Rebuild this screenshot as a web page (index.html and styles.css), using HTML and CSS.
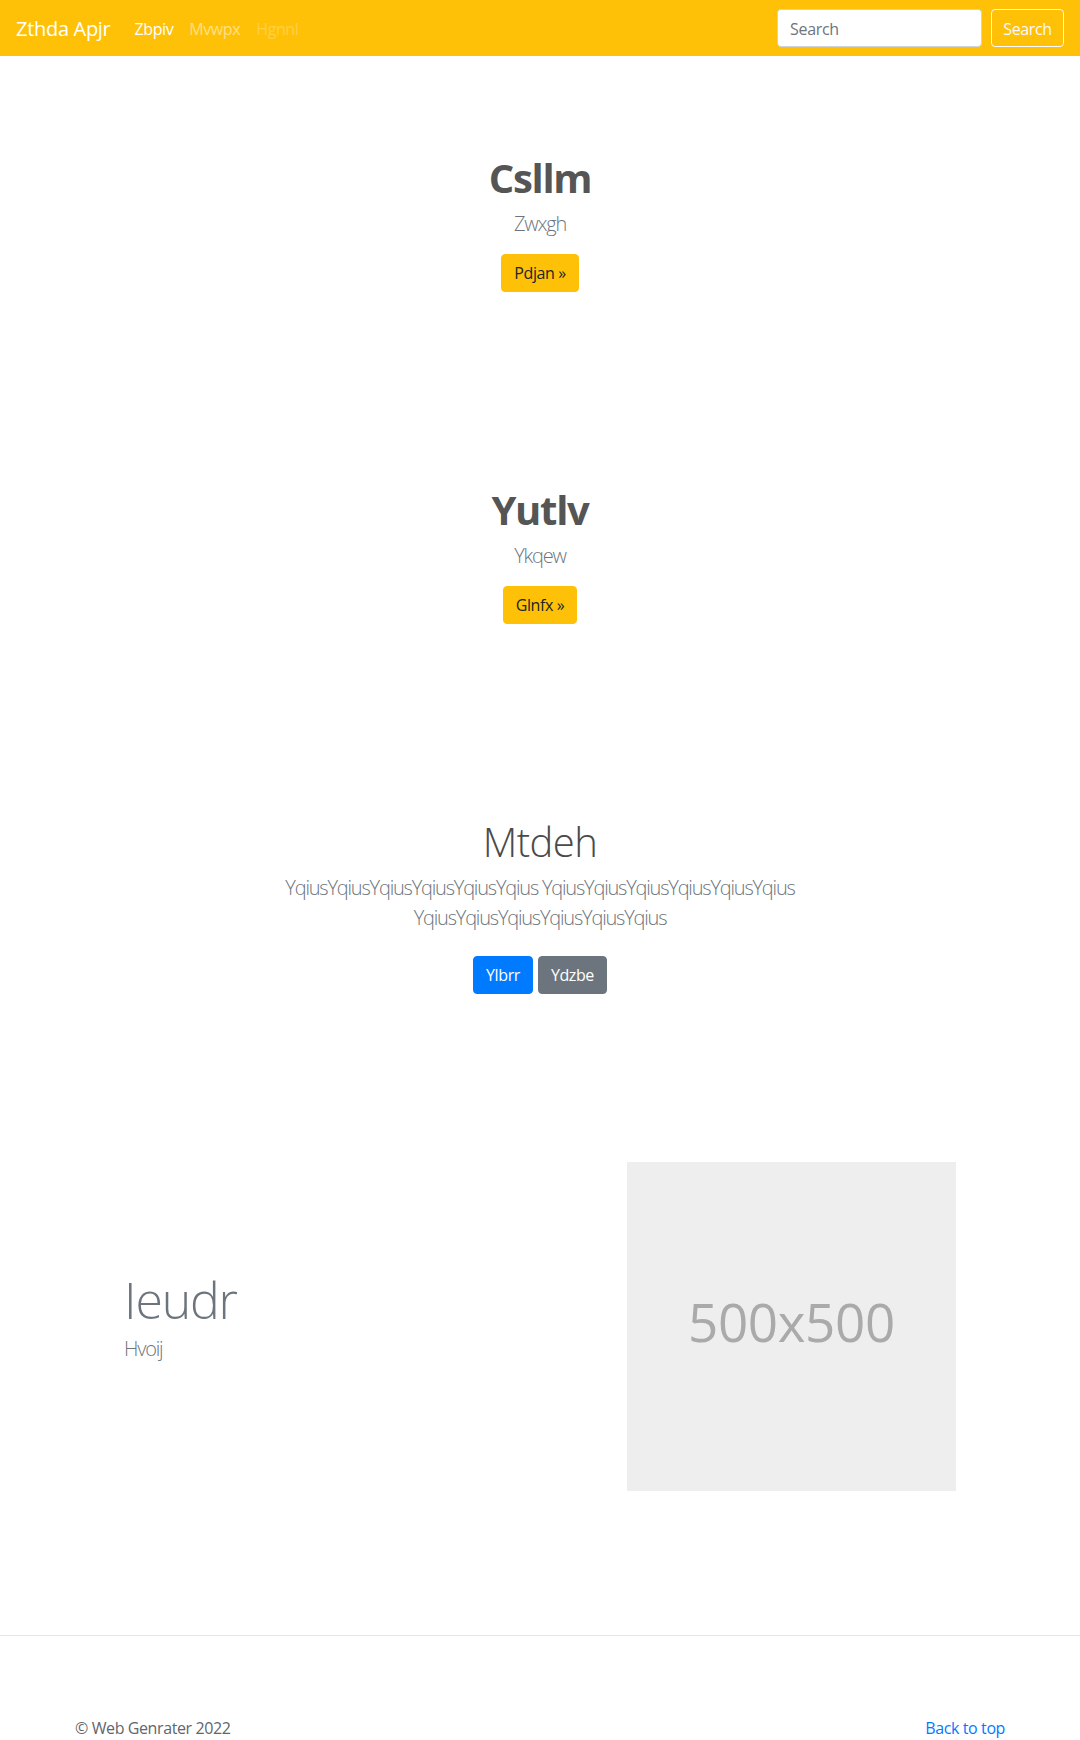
FILE: index.html
```
<!DOCTYPE html>
<html lang="en">
<head>
<meta charset="utf-8">
<title>Zthda Apjr</title>
<link rel="stylesheet" href="styles.css">
</head>
<body>
<nav class="navbar">
  <a class="brand" href="#">Zthda Apjr</a>
  <ul class="nav-links">
    <li><a class="nav-link active" href="#">Zbpiv</a></li>
    <li><a class="nav-link" href="#">Mvwpx</a></li>
    <li><a class="nav-link disabled" href="#">Hgnnl</a></li>
  </ul>
  <form class="search">
    <input class="search-input" type="text" placeholder="Search">
    <button class="btn btn-outline-light" type="button">Search</button>
  </form>
</nav>

<section class="hero">
  <div class="hero-inner">
    <h1 class="hero-title bold">Csllm</h1>
    <p class="lead">Zwxgh</p>
    <div class="actions"><a class="btn btn-warning" href="#">Pdjan »</a></div>
  </div>
</section>

<section class="hero">
  <div class="hero-inner">
    <h1 class="hero-title bold">Yutlv</h1>
    <p class="lead">Ykqew</p>
    <div class="actions"><a class="btn btn-warning" href="#">Glnfx »</a></div>
  </div>
</section>

<section class="hero">
  <div class="hero-inner">
    <h1 class="hero-title light">Mtdeh</h1>
    <p class="lead">YqiusYqiusYqiusYqiusYqiusYqius YqiusYqiusYqiusYqiusYqiusYqius YqiusYqiusYqiusYqiusYqiusYqius</p>
    <div class="actions spaced">
      <a class="btn btn-primary" href="#">Ylbrr</a>
      <a class="btn btn-secondary" href="#">Ydzbe</a>
    </div>
  </div>
</section>

<div class="featurette">
  <div class="feat-text">
    <h2 class="feat-heading">Ieudr</h2>
    <p class="lead">Hvoij</p>
  </div>
  <div class="feat-media">
    <div class="placeholder">500x500</div>
  </div>
</div>

<hr class="divider">

<footer class="footer">
  <p class="copy">© Web Genrater 2022</p>
  <a class="top-link" href="#">Back to top</a>
</footer>
</body>
</html>
```

FILE: styles.css
```
* { box-sizing: border-box; }

html, body {
  margin: 0;
  padding: 0;
}

body {
  font-family: "Open Sans", "Noto Sans", "DejaVu Sans", sans-serif;
  font-size: 16px;
  line-height: 1.5;
  color: #212529;
  background: #fff;
}

a { text-decoration: none; }

/* Navbar */
.navbar {
  display: flex;
  align-items: center;
  height: 56px;
  padding: 8px 16px;
  background: #ffc107;
}

.brand {
  font-size: 20px;
  line-height: 30px;
  padding: 6px 0 4px;
  margin-right: 16px;
  color: #fff;
  letter-spacing: -0.3px;
}

.nav-links {
  display: flex;
  list-style: none;
  margin: 0;
  padding: 0;
}

.nav-link {
  display: block;
  padding: 9px 8px 7px;
  color: rgba(255, 255, 255, 0.5);
  letter-spacing: -0.4px;
}

.nav-link.active { color: #fff; }
.nav-link.disabled { color: rgba(255, 255, 255, 0.25); }

.search {
  display: flex;
  align-items: center;
  margin-left: auto;
  gap: 9px;
}

.search-input {
  width: 205px;
  height: 38px;
  padding: 7px 12px 5px;
  font-family: inherit;
  font-size: 16px;
  color: #495057;
  background: #fff;
  border: 1px solid #ced4da;
  border-radius: 4px;
  outline: none;
}

.search-input::placeholder { color: #6c757d; letter-spacing: -0.3px; }

/* Buttons */
.btn {
  display: inline-block;
  height: 38px;
  padding: 6px 12px;
  font-family: inherit;
  font-size: 16px;
  line-height: 24px;
  border: 1px solid transparent;
  border-radius: 4px;
  letter-spacing: -0.4px;
  cursor: pointer;
}

.btn-outline-light {
  background: transparent;
  color: #f8f9fa;
  border-color: #f8f9fa;
  width: 73px;
  padding: 7px 0 5px;
  text-align: center;
}

.btn-warning {
  background: #ffc107;
  border-color: #ffc107;
  color: #212529;
}

.btn-primary {
  background: #007bff;
  border-color: #007bff;
  color: #fff;
}

.btn-secondary {
  background: #6c757d;
  border-color: #6c757d;
  color: #fff;
}

/* Hero sections */
.hero {
  padding: 96px 0;
  text-align: center;
}

.hero-inner {
  max-width: 640px;
  margin: 0 auto;
  padding: 0 15px;
}

.hero-title {
  margin: 0 0 6px;
  padding-top: 2px;
  font-size: 40px;
  line-height: 48px;
}

.hero-title.bold {
  font-weight: 700;
  color: #555;
  letter-spacing: -1.3px;
}

.hero-title.light {
  font-weight: 300;
  color: #4a4a4a;
  letter-spacing: -0.6px;
}

.lead {
  margin: 0 0 15px;
  padding-top: 1px;
  font-size: 20px;
  line-height: 30px;
  font-weight: 300;
  color: #6c757d;
  letter-spacing: -1.2px;
}

.actions {
  display: flex;
  justify-content: center;
  gap: 5px;
}

.actions.spaced { padding: 8px 0; }

/* Featurette */
.featurette {
  display: grid;
  grid-template-columns: 7fr 5fr;
  align-items: center;
  max-width: 862px;
  margin: 64px auto 0;
}

.feat-text, .feat-media { padding: 0 15px; }

.feat-heading {
  margin: 0 0 8px;
  font-size: 50px;
  line-height: 1;
  font-weight: 300;
  letter-spacing: -1.2px;
  color: #6c757d;
}

.placeholder {
  display: flex;
  align-items: center;
  justify-content: center;
  width: 100%;
  aspect-ratio: 1 / 1;
  padding-bottom: 9px;
  background: #eee;
  color: #aaa;
  font-size: 53px;
  letter-spacing: -0.4px;
}

/* Divider & footer */
.divider {
  margin: 144px 0 0;
  border: 0;
  border-top: 1px solid rgba(0, 0, 0, 0.1);
}

.footer {
  display: flex;
  justify-content: space-between;
  align-items: flex-start;
  max-width: 960px;
  margin: 0 auto;
  padding: 80px 15px 48px;
}

.copy {
  margin: 0;
  color: #5f666d;
  letter-spacing: -0.4px;
}

.top-link {
  color: #007bff;
  letter-spacing: -0.4px;
}
```
